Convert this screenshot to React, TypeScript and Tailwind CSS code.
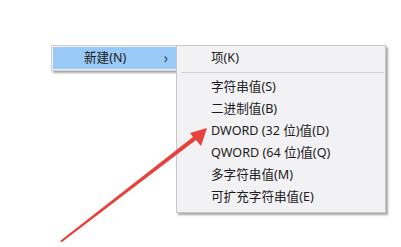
import React from 'react';

const items = [
  '字符串值(S)',
  '二进制值(B)',
  'DWORD (32 位)值(D)',
  'QWORD (64 位)值(Q)',
  '多字符串值(M)',
  '可扩充字符串值(E)',
];

export default function App() {
  return (
    <div
      className="relative w-[401px] h-[247px] bg-white overflow-hidden text-[12.6px] text-[#1b1b1b]"
      style={{ fontFamily: '"Noto Sans", "Noto Sans CJK SC", sans-serif' }}
    >
      {/* menu parent */}
      <div className="absolute left-[51px] top-[45px] w-[140px] h-[26px] bg-[#f2f2f2] border border-[#cfcfcf] shadow-[2px_2px_2px_rgba(0,0,0,0.35)] p-[1px]">
        <div className="flex items-center h-[22px] bg-[#99c9f6] pl-[31px] pr-[10px]">
          <span className="flex-1 leading-none">新建(N)</span>
          <span className="mr-[11px] text-[14px] leading-none text-[#444]">›</span>
        </div>
      </div>

      {/* sous-menu */}
      <div className="absolute left-[176px] top-[45px] w-[210px] h-[168px] bg-[#f2f1f4] border border-[#c8c8c8] shadow-[2px_2px_2px_rgba(0,0,0,0.35)] pt-[1px]">
        <div className="flex items-center h-[22px] pl-[34px] leading-none">项(K)</div>
        <div className="h-[7px] flex items-center pl-[4px] pr-[1px]">
          <div className="h-px w-full bg-[#d4d4d4]" />
        </div>
        {items.map((t) => (
          <div key={t} className="flex items-center h-[22px] pl-[34px] leading-none whitespace-nowrap">
            {t}
          </div>
        ))}
      </div>

      {/* fleche rouge */}
      <svg className="absolute inset-0" width="401" height="247" viewBox="0 0 401 247">
        <polygon
          points="60,241 62,242 196,140 201,146 207,128 190,133 193,137"
          fill="#e8403a"
        />
      </svg>
    </div>
  );
}
